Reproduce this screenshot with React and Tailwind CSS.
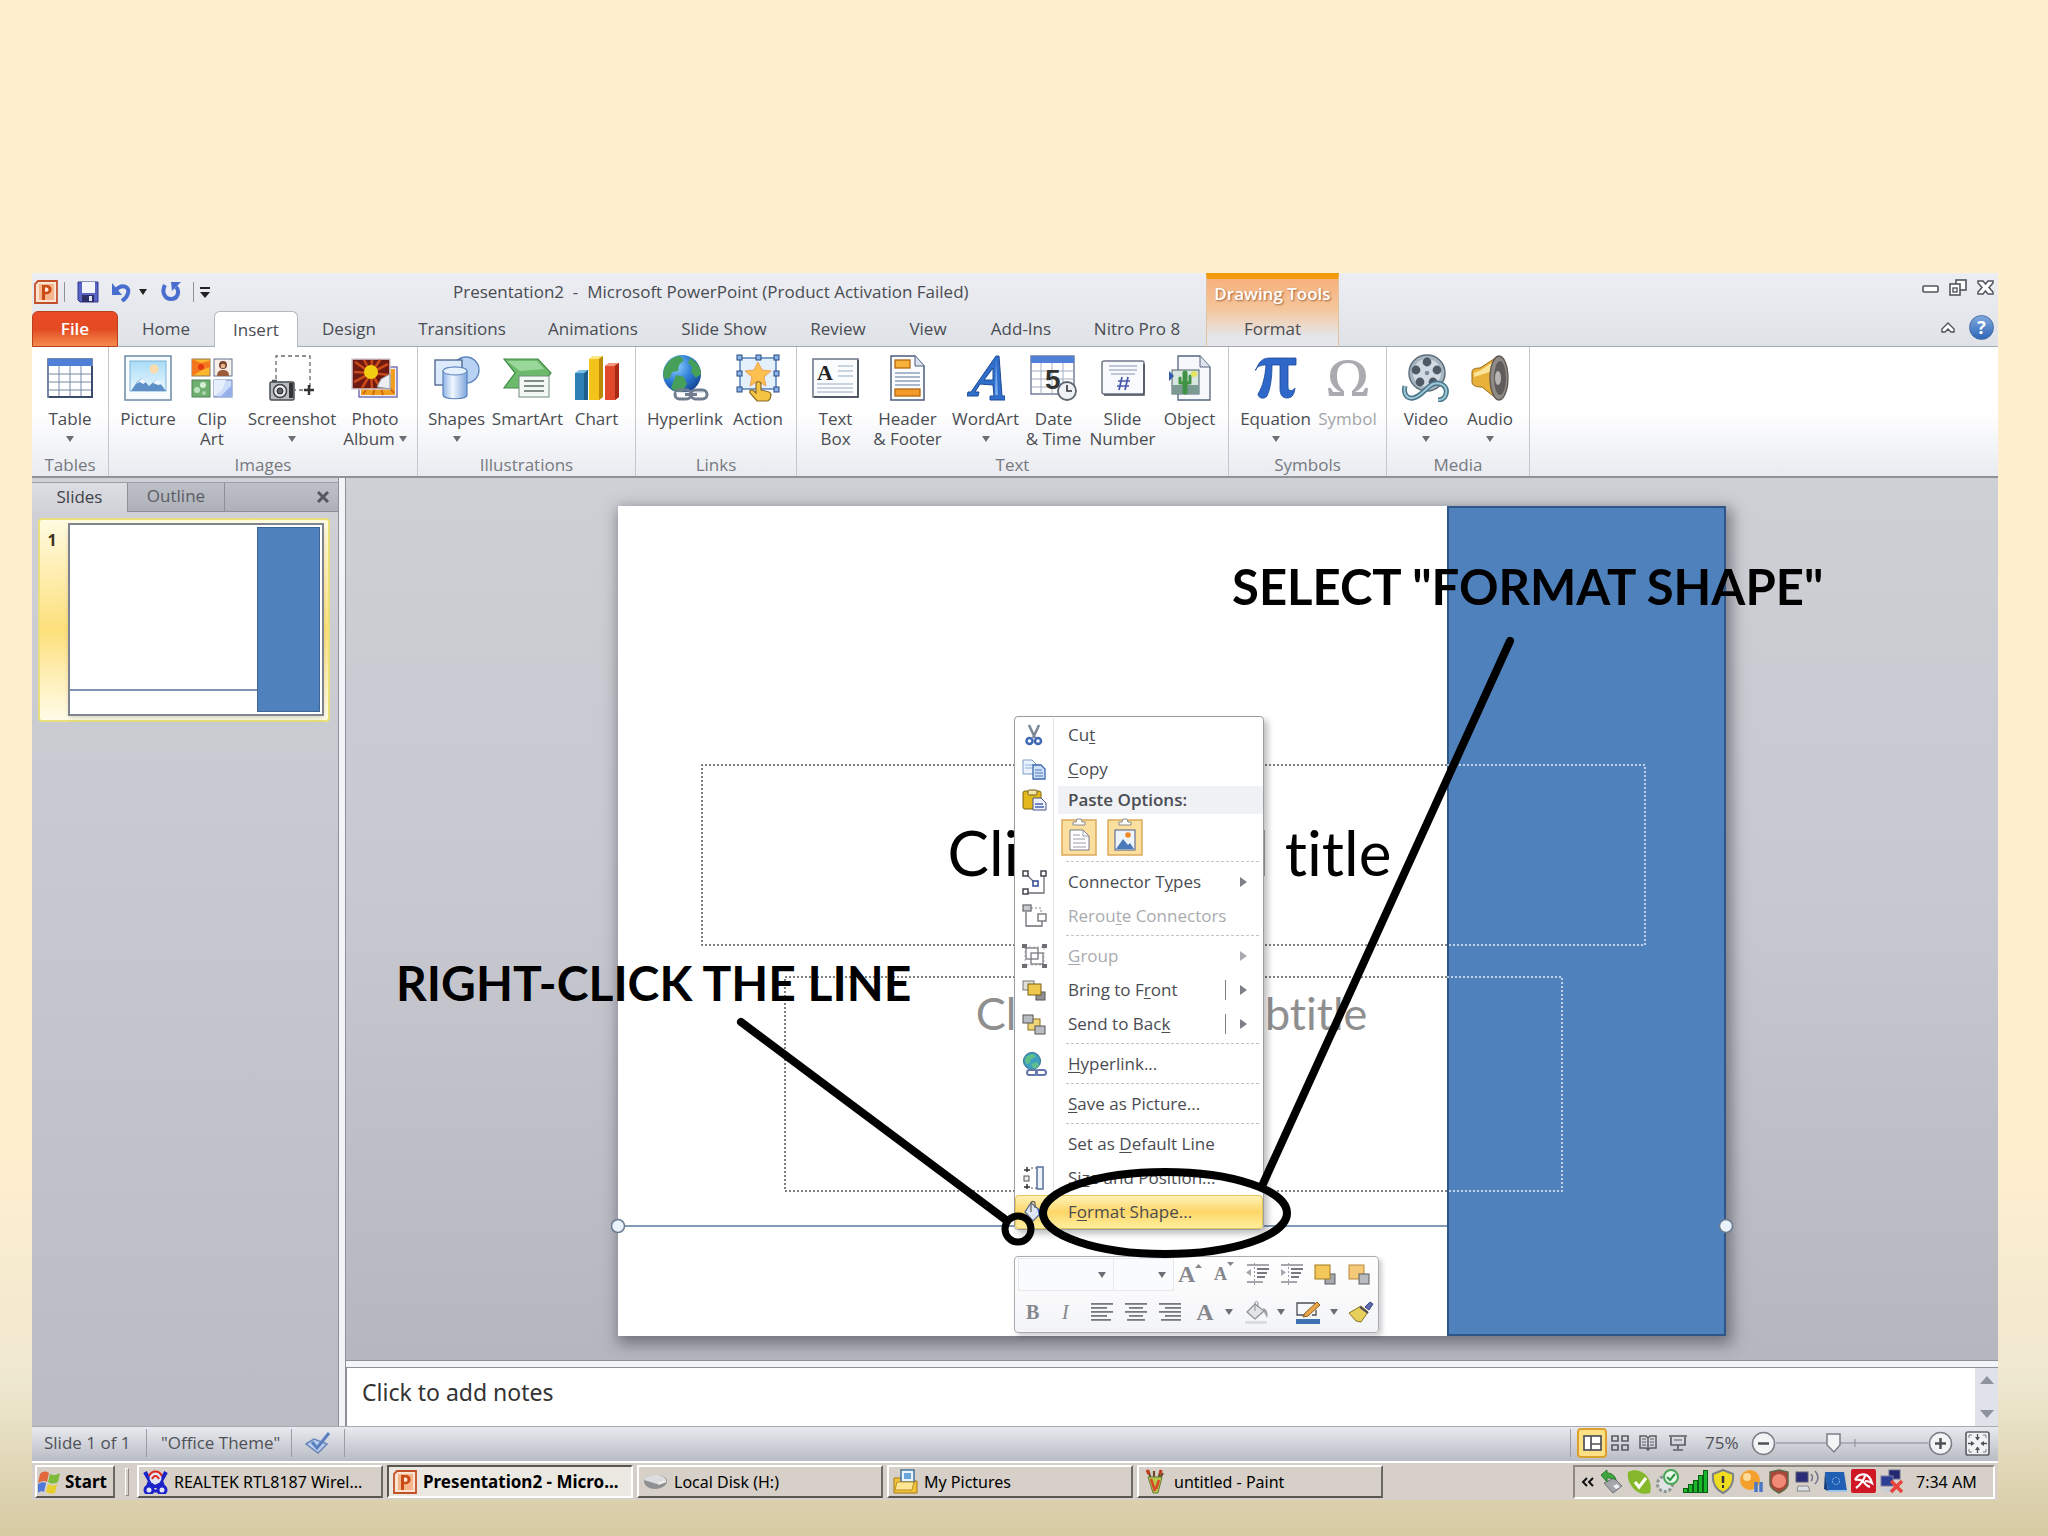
import React from "react";

/* ---------- small helpers ---------- */

function Svg({ w, h, children, ...rest }) {
  return (
    <svg width={w} height={h} viewBox={`0 0 ${w} ${h}`} fill="none" aria-hidden="true" className="shrink-0" {...rest}>
      {children}
    </svg>
  );
}

function Caret({ color = "#6b6e75" }) {
  return (
    <Svg w={8} h={6}>
      <path d="M0 0h8L4 6z" fill={color} />
    </Svg>
  );
}

function PptIcon({ w = 24, h = 24 }) {
  return (
    <svg width={w} height={h} viewBox="0 0 24 24" fill="none" aria-hidden="true" className="shrink-0">
      <path d="M4 1h19v22H1V4z" fill="#fbe3d2" stroke="#c2512a" strokeWidth="1.800" />
      <path d="M5 4h15v16H5z" fill="#f6b48c" />
      <path d="M8 20V5h5a4.600 4.600 0 0 1 0 9.200h-2V20z" fill="#c94a14" />
      <path d="M11 7.500h1.800a2.200 2.200 0 0 1 0 4.300H11z" fill="#fde9da" />
    </svg>
  );
}

/* ---------- ribbon icons ---------- */

const TableIcon = () => (
  <Svg w={46} h={40}>
    <rect x="1" y="1" width="44" height="38" fill="#fff" stroke="#4a5f8a" strokeWidth="1.500" />
    <rect x="1" y="1" width="44" height="7" fill="#4f7fd6" />
    <path d="M12 8v31M23 8v31M34 8v31M1 16h44M1 24h44M1 32h44" stroke="#7b89a8" />
    <path d="M2 39h43V8" stroke="#3c4a6b" strokeWidth="2" />
  </Svg>
);

const PictureIcon = () => (
  <Svg w={48} h={46}>
    <defs>
      <linearGradient id="sky" x1="0" y1="0" x2="0" y2="1">
        <stop offset="0" stopColor="#a9dcf7" />
        <stop offset="1" stopColor="#e9f7fd" />
      </linearGradient>
    </defs>
    <rect x="1" y="1" width="46" height="44" fill="#f8fcff" stroke="#6c8ba6" strokeWidth="1.500" />
    <rect x="6" y="6" width="36" height="30" fill="url(#sky)" stroke="#7fb2d6" />
    <circle cx="30" cy="14" r="4.500" fill="#fbdcae" />
    <path d="M7 36l6-9 5-4 7 8 8-7 9 12z" fill="#5f8fc7" />
    <path d="M12 29l6-6 4 4-3 2-3-2zM29 28l4-4 5 5-4 1z" fill="#eef7ff" />
  </Svg>
);

const ClipArtIcon = () => (
  <Svg w={42} h={40}>
    <rect x="1" y="1" width="18" height="17" fill="#fbb62c" stroke="#8e7a55" />
    <path d="M1 1l9 4 9-2v6l-8 3-10 6z" fill="#f4761d" />
    <circle cx="10" cy="9" r="3" fill="#e23a12" />
    <rect x="23" y="1" width="18" height="17" fill="#f6efe8" stroke="#65738f" />
    <circle cx="32" cy="7" r="4" fill="#7a4630" />
    <circle cx="32" cy="8" r="2.300" fill="#e7b48d" />
    <path d="M26 18c0-4 2-6 6-6s6 2 6 6z" fill="#9b5a3a" />
    <rect x="1" y="22" width="18" height="17" fill="#6fb071" stroke="#4f8059" />
    <circle cx="6" cy="32" r="3" fill="#bfe3c0" />
    <circle cx="12" cy="27" r="3" fill="#d5efd5" />
    <circle cx="13" cy="35" r="2" fill="#a8d6aa" />
    <rect x="23" y="22" width="18" height="17" fill="#cddcf8" stroke="#6b83b5" />
    <path d="M23 22h12l-4 10-8 6z" fill="#e8effc" />
    <path d="M41 27v12H29z" fill="#97b0ec" />
  </Svg>
);

const ScreenshotIcon = () => (
  <Svg w={46} h={46}>
    <path d="M7 24V1h34v34H26" stroke="#6b6b6b" strokeWidth="1.300" strokeDasharray="4 3" />
    <path d="M35 35h10M40 30v10" stroke="#333" strokeWidth="2.500" />
    <rect x="1" y="27" width="24" height="18" rx="1.500" fill="#b9bcc0" stroke="#4a4d52" strokeWidth="1.500" />
    <path d="M3 26h5" stroke="#4a4d52" strokeWidth="2.500" />
    <circle cx="11" cy="36" r="6.500" fill="#ecedef" stroke="#3d4045" strokeWidth="1.500" />
    <circle cx="11" cy="36" r="3" fill="#5d6270" stroke="#222" />
    <rect x="20" y="28" width="4" height="15" fill="#333" />
  </Svg>
);

const PhotoAlbumIcon = () => (
  <Svg w={48} h={40}>
    <rect x="8" y="9" width="38" height="30" fill="#eef" stroke="#7a74b0" strokeWidth="1.500" />
    <rect x="10" y="11" width="34" height="26" fill="#f0a01e" />
    <path d="M12 36l12-16M22 37l4-16M32 37l-4-14M43 35L30 20" stroke="#d06a10" strokeWidth="2" />
    <rect x="1" y="1" width="38" height="30" fill="#6e1a10" stroke="#d9cfd6" strokeWidth="1.500" />
    <path d="M20 15L4 4M20 15L13 2M20 15l1-13M20 15l9-13M20 15l17-9M20 15l18 2M20 15L3 14M20 15L3 24M20 15l-9 15M20 15l1 15M20 15l9 14" stroke="#c8481a" strokeWidth="2.600" />
    <circle cx="20" cy="14" r="7" fill="#f3cf12" />
    <path d="M39 16l-9 5-4 8 13 2z" fill="#eceef2" stroke="#8d929c" />
  </Svg>
);

const ShapesIcon = () => (
  <Svg w={48} h={44}>
    <defs>
      <linearGradient id="cyl" x1="0" y1="0" x2="1" y2="0">
        <stop offset="0" stopColor="#8fb4e6" />
        <stop offset="0.400" stopColor="#f1f7ff" />
        <stop offset="1" stopColor="#7ea6dc" />
      </linearGradient>
    </defs>
    <circle cx="33" cy="14" r="13" fill="#b8d2f3" stroke="#5a82bd" strokeWidth="1.300" />
    <rect x="2" y="4" width="27" height="25" fill="#dceafb" stroke="#47608c" strokeWidth="1.300" />
    <path d="M10 15c0-5 24-5 24 0v24c0 5-24 5-24 0z" fill="url(#cyl)" stroke="#5a82bd" strokeWidth="1.200" />
    <ellipse cx="22" cy="15" rx="12" ry="4" fill="#e7f1fd" stroke="#5a82bd" />
  </Svg>
);

const SmartArtIcon = () => (
  <Svg w={50} h={40}>
    <path d="M1 1h34l13 14-13 15H1l11-15z" fill="#6dba6c" stroke="#3f8a45" strokeWidth="1.200" />
    <path d="M4 3h30l7 8-24 2z" fill="#9ad79a" />
    <rect x="16" y="18" width="30" height="21" fill="#f3f8f4" stroke="#6f8d78" />
    <path d="M21 23h20M21 28h20M21 33h20" stroke="#5c6b64" strokeWidth="1.600" />
  </Svg>
);

const ChartIcon = () => (
  <Svg w={46} h={46}>
    <path d="M1 18l4-3h10l-2 3z" fill="#7ac0e8" />
    <rect x="1" y="18" width="13" height="27" fill="#2e7fb4" />
    <path d="M10 18l4-3v30h-4z" fill="#1c5f8c" />
    <path d="M31 11l4-3h10v34l-4 3H31z" fill="#e0492b" />
    <path d="M31 11h9l5-3H35z" fill="#f6987f" />
    <path d="M41 11l4-3v34l-4 3z" fill="#a82a12" />
    <path d="M15 4l4-3h10v41l-4 3H15z" fill="#f2c318" />
    <path d="M15 4h9l5-3H19z" fill="#fbe784" />
    <path d="M25 4l4-3v41l-4 3z" fill="#bd8a06" />
  </Svg>
);

const HyperlinkIcon = () => (
  <Svg w={48} h={48}>
    <defs>
      <radialGradient id="globe" cx="0.350" cy="0.300" r="0.800">
        <stop offset="0" stopColor="#8fd0ff" />
        <stop offset="0.500" stopColor="#2f7fd8" />
        <stop offset="1" stopColor="#123d8c" />
      </radialGradient>
    </defs>
    <circle cx="21" cy="20" r="19" fill="url(#globe)" />
    <path d="M5 11c4-6 9-9 14-9l4 4-5 5-1 6-6 1-2 6-6 1c-1-5-1-9 2-14zM15 21l8 2 3 7-5 8c-4 1-8-1-11-4zM29 4c7 4 11 9 11 16l-5 4-5-6 1-5-4-4z" fill="#47a05a" />
    <g stroke="#707c8f" strokeWidth="3">
      <rect x="14" y="36" width="16" height="9" rx="4.500" fill="none" />
      <rect x="30" y="36" width="16" height="9" rx="4.500" fill="none" />
      <path d="M24 40.500h12" />
    </g>
    <path d="M15 38.500h12M32 38.500h12" stroke="#dfe6f0" strokeWidth="1.200" />
  </Svg>
);

const ActionIcon = () => (
  <Svg w={44} h={48}>
    <rect x="4" y="4" width="36" height="31" fill="#e4f0fc" stroke="#3c6eb0" strokeWidth="1.300" />
    <path d="M22 8l4 8 9 1-7 6 2 9-8-5-8 5 2-9-7-6 9-1z" fill="#fcc050" stroke="#eda05a" />
    {[
      [1, 1], [20, 1], [38, 1], [1, 17], [38, 17], [1, 33], [38, 33],
    ].map(([x, y]) => (
      <rect key={`${x}-${y}`} x={x} y={y} width="5" height="5" fill="#8cb4e8" stroke="#24497f" />
    ))}
    <path d="M20 30c0-3 5-3 5 0v6l8 2c3 1 2 4 1 7l-2 2H21l-7-8c-1-3 2-4 4-2l2 2z" fill="#f5c445" stroke="#8a6a2a" strokeWidth="1.200" />
  </Svg>
);

const TextBoxIcon = () => (
  <Svg w={47} h={40}>
    <rect x="1" y="1" width="45" height="38" fill="#fbfcfe" stroke="#6a7486" strokeWidth="1.500" />
    <path d="M46 2v37H2" stroke="#3f4754" strokeWidth="1.500" />
    <path d="M26 8h15M26 13h15M26 18h15M5 26h36M5 30h36M5 34h36" stroke="#9aa9c2" strokeWidth="1.200" />
    <text x="5" y="22" fontFamily="Liberation Serif, serif" fontWeight="700" fontSize="22" fill="#222">A</text>
  </Svg>
);

const HeaderFooterIcon = () => (
  <Svg w={35} h={46}>
    <path d="M1 1h24l9 10v34H1z" fill="#fbfcff" stroke="#4d5b7c" strokeWidth="1.500" />
    <path d="M25 1v10h9" fill="#dce4f2" stroke="#4d5b7c" />
    <rect x="5" y="5" width="15" height="8" fill="#f7b23b" stroke="#b5690f" strokeWidth="1.300" />
    <path d="M5 18h25M5 22h25M5 26h25M5 30h25" stroke="#8ea0bd" strokeWidth="1.400" />
    <rect x="5" y="34" width="25" height="7" fill="#f39a2b" stroke="#b5690f" strokeWidth="1.300" />
  </Svg>
);

const WordArtIcon = () => (
  <Svg w={38} h={46}>
    <path d="M29 1h3l3 40h3v4H23v-4h4l-1-11-13-1-5 8h4l-1 4H0l1-4h3zM26 13l-9 12h9z" fill="#2f6fcb" stroke="#1d4a94" />
    <path d="M29 4l2 36h-3z" fill="#79aaf0" />
  </Svg>
);

const DateTimeIcon = () => (
  <Svg w={47} h={46}>
    <rect x="1" y="1" width="43" height="38" fill="#fff" stroke="#5d6b88" strokeWidth="1.300" />
    <rect x="1" y="1" width="43" height="7" fill="#4f7fd6" />
    <path d="M11 8v31M22 8v31M33 8v31M1 16h43M1 24h43M1 32h43" stroke="#a5aec2" />
    <text x="15" y="34" fontFamily="Liberation Sans, sans-serif" fontWeight="700" fontSize="28" fill="#333">5</text>
    <circle cx="37" cy="36" r="9" fill="#eef2f7" stroke="#5f6670" strokeWidth="1.800" />
    <path d="M37 30v6h5" stroke="#333" strokeWidth="1.600" />
  </Svg>
);

const SlideNumberIcon = () => (
  <Svg w={44} h={36}>
    <rect x="1" y="1" width="42" height="33" rx="2" fill="#f8fafd" stroke="#6f7887" strokeWidth="1.500" />
    <path d="M3 35h40V4" stroke="#454d5a" strokeWidth="1.500" />
    <path d="M8 6h28M8 10h28M10 14h24" stroke="#a9b6cb" strokeWidth="1.300" />
    <path d="M21 17l-3 13M27 17l-3 13M17 21h12M16 26h12" stroke="#4a58a8" strokeWidth="1.700" />
  </Svg>
);

const ObjectIcon = () => (
  <Svg w={42} h={46}>
    <path d="M9 1h22l10 11v33H9z" fill="#f6f8fc" stroke="#56647f" strokeWidth="1.300" />
    <path d="M31 1v11h10" fill="#dde5f1" stroke="#56647f" />
    <rect x="3" y="15" width="27" height="24" fill="#d8e6e0" stroke="#4a5f6b" />
    <path d="M3 30h27v9H3z" fill="#7b9a92" />
    <path d="M16 37V18" stroke="#3f9143" strokeWidth="5" strokeLinecap="round" />
    <path d="M11 23v5h10v-7" stroke="#3f9143" strokeWidth="3" strokeLinecap="round" strokeLinejoin="round" />
    <circle cx="25" cy="19" r="3" fill="#e4e35a" />
    <path d="M0 16l5 5-5 5z" fill="#2f5ca8" />
  </Svg>
);

const PiIcon = () => (
  <Svg w={42} h={42}>
    <path d="M1 13C4 4 8 1 15 1h26v7h-8v22c0 4 4 5 7 1-1 8-4 10-8 10-5 0-7-4-7-9V8h-8c0 14-2 25-5 31-3 4-9 2-9-2 5-8 7-17 8-29-5 0-8 1-11 5z" fill="#2f68c8" stroke="#1b469a" strokeWidth="0.800" />
  </Svg>
);

const OmegaIcon = () => (
  <Svg w={42} h={38}>
    <path d="M1 29h3l2 4h8C6 29 3 23 3 17 3 7 10 1 21 1s18 6 18 16c0 6-3 12-11 16h8l2-4h3l-1 8H25v-5c5-4 7-9 7-15 0-9-4-13-11-13S10 8 10 17c0 6 2 11 7 15v5H2z" fill="#a9abae" />
  </Svg>
);

const VideoIcon = () => (
  <Svg w={48} h={48}>
    <circle cx="25" cy="19" r="18" fill="#a7b5c1" stroke="#5e6d7b" strokeWidth="1.500" />
    <circle cx="25" cy="19" r="14" fill="#d1dae2" />
    {[
      [25, 8], [35, 16], [31, 28], [18, 28], [14, 16],
    ].map(([x, y]) => (
      <circle key={`${x}-${y}`} cx={x} cy={y} r="4.400" fill="#4d5a66" />
    ))}
    <circle cx="25" cy="19" r="2.200" fill="#7d8c99" />
    <path d="M3 32c-2 8 2 13 8 12 8-1 12-10 20-14 8-3 15 3 13 10-1 4-4 6-8 6" stroke="#4a7487" strokeWidth="5" />
    <path d="M3 32c-2 8 2 13 8 12 8-1 12-10 20-14 8-3 15 3 13 10-1 4-4 6-8 6" stroke="#9cc7d6" strokeWidth="2" />
  </Svg>
);

const AudioIcon = () => (
  <Svg w={38} h={46}>
    <path d="M1 17c0-3 3-4 8-4L26 2v42L11 32c-7 0-10-2-10-5z" fill="#e8b23a" stroke="#97691a" />
    <path d="M3 18l7-3 12-8v9L3 22z" fill="#fbe39a" />
    <ellipse cx="28" cy="23" rx="9" ry="22" fill="#8e8a86" stroke="#5d5750" strokeWidth="1.300" />
    <ellipse cx="29" cy="23" rx="6" ry="17" fill="#605c5c" />
    <ellipse cx="27" cy="23" rx="3" ry="7" fill="#b9b5b2" />
  </Svg>
);

/* ---------- ribbon data ---------- */

const groups = [
  { name: "Tables", box: "w-[77px]", items: [{ lines: ["Table"], drop: true, box: "w-[74px]", Icon: TableIcon }] },
  {
    name: "Images", box: "w-[309px]", shift: "pr-1.5", items: [
      { lines: ["Picture"], box: "w-[70px]", Icon: PictureIcon },
      { lines: ["Clip", "Art"], box: "w-[58px]", Icon: ClipArtIcon },
      { lines: ["Screenshot"], drop: true, box: "w-[102px]", Icon: ScreenshotIcon },
      { lines: ["Photo", "Album"], drop: true, box: "w-[64px]", Icon: PhotoAlbumIcon },
    ],
  },
  {
    name: "Illustrations", box: "w-[218px]", shift: "pr-0.5", items: [
      { lines: ["Shapes"], drop: true, box: "w-[68px]", Icon: ShapesIcon },
      { lines: ["SmartArt"], box: "w-[74px]", Icon: SmartArtIcon },
      { lines: ["Chart"], box: "w-[64px]", Icon: ChartIcon },
    ],
  },
  {
    name: "Links", box: "w-[161px]", shift: "pr-0.5", items: [
      { lines: ["Hyperlink"], box: "w-[86px]", Icon: HyperlinkIcon },
      { lines: ["Action"], box: "w-[60px]", Icon: ActionIcon },
    ],
  },
  {
    name: "Text", box: "w-[432px]", shift: "pr-1", items: [
      { lines: ["Text", "Box"], box: "w-[64px]", Icon: TextBoxIcon },
      { lines: ["Header", "& Footer"], box: "w-[80px]", Icon: HeaderFooterIcon },
      { lines: ["WordArt"], drop: true, box: "w-[76px]", Icon: WordArtIcon },
      { lines: ["Date", "& Time"], box: "w-[60px]", Icon: DateTimeIcon },
      { lines: ["Slide", "Number"], box: "w-[78px]", Icon: SlideNumberIcon },
      { lines: ["Object"], box: "w-[56px]", Icon: ObjectIcon },
    ],
  },
  {
    name: "Symbols", box: "w-[158px]", shift: "pl-1", items: [
      { lines: ["Equation"], drop: true, box: "w-[76px]", Icon: PiIcon },
      { lines: ["Symbol"], disabled: true, box: "w-[68px]", Icon: OmegaIcon },
    ],
  },
  {
    name: "Media", box: "w-[143px]", items: [
      { lines: ["Video"], drop: true, box: "w-[64px]", Icon: VideoIcon },
      { lines: ["Audio"], drop: true, box: "w-[64px]", Icon: AudioIcon },
    ],
  },
];

function RibbonItem({ lines, drop, disabled, box, Icon }) {
  return (
    <button
      type="button"
      disabled={disabled}
      className={`flex flex-col items-center pt-2 ${box} ${disabled ? "text-[#a3a5a9]" : "text-[#4a4c52]"}`}
    >
      <span className="flex h-[46px] items-center justify-center"><Icon /></span>
      <span className="mt-2 whitespace-nowrap leading-5">{lines[0]}</span>
      <span className="flex h-5 items-center gap-1 whitespace-nowrap leading-5">
        {lines[1]}
        {drop && <Caret />}
      </span>
    </button>
  );
}

function Ribbon() {
  return (
    <div className="flex h-[131px] border-b-2 border-[#8f9299] bg-gradient-to-b from-white via-white to-[#e9ebf0]">
      {groups.map((g) => (
        <section key={g.name} aria-label={g.name} className={`flex flex-col items-center justify-between border-r border-[#c4c7ce] ${g.box}`}>
          <div className={`flex ${g.shift || ""}`}>
            {g.items.map((it) => <RibbonItem key={it.lines.join(" ")} {...it} />)}
          </div>
          <span className="leading-[22px] text-[#76797f]">{g.name}</span>
        </section>
      ))}
    </div>
  );
}

/* ---------- title bar and tabs ---------- */

const tabs = [
  { name: "Home", box: "w-[96px]" },
  { name: "Insert", box: "w-[84px]", active: true },
  { name: "Design", box: "w-[102px]" },
  { name: "Transitions", box: "w-[124px]" },
  { name: "Animations", box: "w-[138px]" },
  { name: "Slide Show", box: "w-[124px]" },
  { name: "Review", box: "w-[104px]" },
  { name: "View", box: "w-[76px]" },
  { name: "Add-Ins", box: "w-[110px]" },
  { name: "Nitro Pro 8", box: "w-[122px]" },
];

function Header() {
  return (
    <header className="flex bg-gradient-to-b from-[#eceef3] to-[#dfe2e7] text-[#4a4c52]">
      <div className="flex w-[1174px] flex-col">
        <div className="flex h-[38px] items-center">
          <div className="flex w-[421px] items-center pl-0.5">
            <PptIcon />
            <span className="ml-1.5 h-5 w-px bg-[#8e9299]" />
            <button type="button" aria-label="Save" className="ml-3">
              <Svg w={22} h={22}>
                <path d="M1 1h20v20H3l-2-2z" fill="#5a64c4" stroke="#2f3690" />
                <rect x="5" y="1" width="13" height="11" fill="#f2f5fc" />
                <rect x="5" y="14" width="12" height="7" fill="#2b2f66" />
                <rect x="12" y="15" width="3" height="5" fill="#dfe3f2" />
              </Svg>
            </button>
            <button type="button" aria-label="Undo" className="ml-3">
              <Svg w={20} h={20}>
                <path d="M5 8c6-7 14-3 12 3-1 4-3 6-6 8" stroke="#4a6ed0" strokeWidth="4" />
                <path d="M1 1v12h10z" fill="#4a6ed0" />
              </Svg>
            </button>
            <button type="button" aria-label="Undo history" className="ml-2"><Caret color="#222" /></button>
            <button type="button" aria-label="Redo" className="ml-3.5">
              <Svg w={20} h={20}>
                <path d="M4 3c-4 7 0 14 6 14 7 0 9-8 5-12" stroke="#4a6ed0" strokeWidth="4" />
                <path d="M10 0h10l-9 9z" fill="#4a6ed0" />
              </Svg>
            </button>
            <span className="ml-3 h-5 w-px bg-[#8e9299]" />
            <button type="button" aria-label="Customize toolbar" className="ml-1.5">
              <Svg w={10} h={11}>
                <path d="M0 1h10" stroke="#222" strokeWidth="2" />
                <path d="M0 5h10l-5 6z" fill="#222" />
              </Svg>
            </button>
          </div>
          <h1 className="whitespace-nowrap">Presentation2 &nbsp;- &nbsp;Microsoft PowerPoint (Product Activation Failed)</h1>
        </div>
        <nav className="flex h-[36px]">
          <button type="button" className="w-[86px] rounded-t-md border border-[#b8401c] bg-gradient-to-b from-[#ea4b26] via-[#e34a22] to-[#f58a4c] font-semibold text-white">File</button>
          {tabs.map((t) => (
            <button
              key={t.name}
              type="button"
              className={`${t.box} whitespace-nowrap ${t.active ? "rounded-t-md border border-b-0 border-[#b4b8bf] bg-white" : "border-b border-[#a5a9b0]"}`}
            >
              {t.name}
            </button>
          ))}
          <span className="flex-1 border-b border-[#a5a9b0]" />
        </nav>
      </div>
      <div className="flex w-[133px] flex-col border-x border-t-[6px] border-x-[#e2c3a0] border-t-[#f09a0c] bg-gradient-to-b from-[#f6b07c] via-[#f4c79c] via-45% to-[#e4e6ea] to-85%">
        <span className="flex h-[32px] items-center justify-center whitespace-nowrap pb-0.5 font-semibold text-white [text-shadow:1px_1px_2px_#a0603a]">Drawing Tools</span>
        <button type="button" className="h-[36px] border-b border-[#a5a9b0]">Format</button>
      </div>
      <div className="flex flex-1 flex-col items-end border-b border-[#a5a9b0] pr-1">
        <div className="flex h-[28px] items-center gap-2.5">
          <button type="button" aria-label="Minimize" className="pt-1">
            <Svg w={17} h={10}><rect x="1" y="2" width="15" height="6" rx="1" fill="#fff" stroke="#50545c" strokeWidth="1.600" /></Svg>
          </button>
          <button type="button" aria-label="Restore">
            <Svg w={18} h={17}>
              <rect x="7" y="1" width="10" height="10" fill="#fff" stroke="#50545c" strokeWidth="1.600" />
              <rect x="1" y="5" width="10" height="11" fill="#fff" stroke="#50545c" strokeWidth="1.600" />
              <rect x="4" y="9" width="4" height="4" stroke="#50545c" strokeWidth="1.400" />
            </Svg>
          </button>
          <button type="button" aria-label="Close">
            <Svg w={17} h={15}>
              <path d="M1 1h5l2.500 3L11 1h5v2l-4 4.500 4 4.500v2h-5l-2.500-3L6 14H1v-2l4-4.500L1 3z" fill="#fff" stroke="#50545c" strokeWidth="1.500" />
            </Svg>
          </button>
        </div>
        <div className="flex h-[44px] items-center gap-3.5 pt-2">
          <button type="button" aria-label="Minimize ribbon">
            <Svg w={14} h={11}>
              <path d="M7 1l6 6v3h-3L7 7l-3 3H1V7z" fill="#fff" stroke="#50545c" strokeWidth="1.400" />
            </Svg>
          </button>
          <button type="button" aria-label="Help" className="flex size-[25px] items-center justify-center rounded-full border border-[#4a6fa5] bg-gradient-to-b from-[#7fa9df] to-[#2f66b6] text-lg font-bold leading-none text-white">?</button>
        </div>
      </div>
    </header>
  );
}

/* ---------- left slide panel ---------- */

function SlidePanel() {
  return (
    <aside className="w-[307px] shrink-0 border-r border-[#8d9098] bg-gradient-to-b from-[#cfd1d6] via-[#c4c7ce] to-[#b9bcc5] pt-1">
      <div className="flex h-[30px] border-t border-[#9a9da5]">
        <button type="button" className="w-[95px] bg-gradient-to-b from-[#dcdee3] to-[#d0d2d8] pb-0.5 leading-6 text-[#3f4147]">Slides</button>
        <button type="button" className="w-[98px] border border-t-0 border-[#8d9098] bg-gradient-to-b from-[#bfc1c8] to-[#adb0b8] pb-0.5 leading-6 text-[#5a5d64]">Outline</button>
        <div className="flex flex-1 items-center justify-end border-b border-[#8d9098] bg-gradient-to-b from-[#bfc1c8] to-[#adb0b8] pr-2">
          <button type="button" aria-label="Close pane">
            <Svg w={14} h={14}><path d="M2 2l10 10M12 2L2 12" stroke="#55585f" strokeWidth="3" /></Svg>
          </button>
        </div>
      </div>
      <div className="ml-1.5 mr-2 mt-1.5 flex h-[204px] rounded-sm border-2 border-[#ebe07c] bg-gradient-to-b from-[#fffbe0] via-[#fddf7a] via-55% to-[#fffce8]">
        <span className="w-[28px] pr-1 pt-2 text-center font-['Noto_Sans'] text-base font-bold text-[#3b3420]">1</span>
        <div className="mb-1 mt-[3px] flex flex-1 border-2 border-[#7e8590] bg-white shadow-md">
          <div className="flex flex-1 flex-col">
            <div className="flex-1 border-b-2 border-[#7d93b4]" />
            <div className="h-[23px]" />
          </div>
          <div className="my-0.5 mr-0.5 w-[63px] border border-[#3e6596] bg-[#4f81bd]" />
        </div>
        <span className="w-1" />
      </div>
    </aside>
  );
}

/* ---------- context menu ---------- */

const menuIcons = {
  cut: (
    <Svg w={18} h={22}>
      <path d="M4 1l6 13M14 1L8 14" stroke="#7b8798" strokeWidth="2.500" />
      <circle cx="4.500" cy="17" r="3" stroke="#3f68b5" strokeWidth="2.500" />
      <circle cx="13" cy="17" r="3" stroke="#3f68b5" strokeWidth="2.500" />
    </Svg>
  ),
  copy: (
    <Svg w={24} h={21}>
      <path d="M1 1h9l4 4v10H1z" fill="#eaf2fd" stroke="#7c9cc6" />
      <path d="M3 6h8M3 9h8" stroke="#8fb0da" />
      <path d="M11 6h8l4 4v10H11z" fill="#cfe0f8" stroke="#3d68ad" strokeWidth="1.300" />
      <path d="M13 11h7M13 14h8M13 17h8" stroke="#4d7bc2" />
    </Svg>
  ),
  paste: (
    <Svg w={25} h={22}>
      <rect x="1" y="2" width="18" height="18" rx="2" fill="#e2b81d" stroke="#7f6410" />
      <rect x="6" y="1" width="9" height="5" rx="1.500" fill="#f4e7a6" stroke="#6b5a1c" />
      <path d="M11 9h8l5 5v7H11z" fill="#eef1fa" stroke="#4a5487" />
      <path d="M13 15h8M13 18h9" stroke="#4a62b8" strokeWidth="1.300" />
    </Svg>
  ),
  connector: (
    <Svg w={25} h={25}>
      <path d="M4 4l10 10M22 6v17H5" stroke="#6d6f75" strokeWidth="1.300" />
      <g fill="#fff" stroke="#44464d" strokeWidth="1.500">
        <rect x="1" y="1" width="5" height="5" /><rect x="19" y="1" width="5" height="5" />
        <rect x="1" y="19" width="5" height="5" /><rect x="11" y="11" width="5" height="5" stroke="#2e4a94" />
      </g>
    </Svg>
  ),
  reroute: (
    <Svg w={25} h={24}>
      <path d="M9 4h10v6" stroke="#888" strokeDasharray="2 2" />
      <path d="M4 8v14h16v-5" stroke="#6d6f74" strokeWidth="1.300" />
      <rect x="1" y="1" width="8" height="6" fill="#c9cbd0" stroke="#6d6f74" strokeWidth="1.300" />
      <rect x="16" y="10" width="8" height="7" fill="#fff" stroke="#6d6f74" strokeWidth="1.300" />
    </Svg>
  ),
  group: (
    <Svg w={25} h={24}>
      <path d="M3 3h19v18H3z" stroke="#b4b6ba" strokeDasharray="2 2" />
      <rect x="4" y="4" width="12" height="11" stroke="#77797e" strokeWidth="1.300" />
      <rect x="9" y="9" width="12" height="11" stroke="#77797e" strokeWidth="1.300" />
      <g fill="#6d6f75"><rect width="5" height="4" /><rect x="20" width="5" height="4" /><rect y="20" width="5" height="4" /><rect x="20" y="20" width="5" height="4" /></g>
    </Svg>
  ),
  front: (
    <Svg w={24} h={21}>
      <rect x="1" y="1" width="11" height="9" fill="#e0e2da" stroke="#777" />
      <rect x="14" y="12" width="9" height="8" fill="#8f9196" stroke="#555" />
      <rect x="6" y="4" width="13" height="11" fill="#efc84e" stroke="#7a5f14" />
    </Svg>
  ),
  back: (
    <Svg w={24} h={21}>
      <rect x="6" y="5" width="12" height="11" fill="#f2d77a" stroke="#8a6d1c" />
      <rect x="1" y="1" width="10" height="8" fill="#b9bcc2" stroke="#555" />
      <rect x="13" y="12" width="10" height="8" fill="#b9bcc2" stroke="#555" />
    </Svg>
  ),
  link: (
    <Svg w={25} h={25}>
      <circle cx="10" cy="9" r="8.500" fill="#3f9fc0" stroke="#2c6d86" />
      <path d="M3 7c2-4 6-5 9-5l2 3-5 2-1 4-4 1zM9 12l6-2 2 4-5 3z" fill="#5fbf8a" />
      <rect x="5" y="18" width="10" height="5" rx="2.500" stroke="#6676ad" strokeWidth="2" />
      <rect x="14" y="18" width="10" height="5" rx="2.500" stroke="#6676ad" strokeWidth="2" />
    </Svg>
  ),
  size: (
    <Svg w={22} h={24}>
      <path d="M1 4h6M4 1v5M1 21h6M4 18v5" stroke="#333" strokeWidth="1.500" />
      <path d="M8 2h6M8 22h6" stroke="#555" strokeDasharray="2 2" />
      <rect x="1" y="10" width="5" height="5" fill="#eee" stroke="#555" />
      <rect x="14" y="1" width="6" height="22" fill="#eef3fb" stroke="#5a6f9f" strokeWidth="1.500" />
    </Svg>
  ),
  fill: (
    <Svg w={24} h={24}>
      <path d="M8 3l11 9-9 9-8-9z" fill="#dfe6f3" stroke="#5a6b92" strokeWidth="1.300" />
      <path d="M8 12V3c0-2 4-2 4 0v5" stroke="#666" strokeWidth="1.300" />
      <path d="M14 8l8 6-2 9-4-7z" fill="#3567c4" />
    </Svg>
  ),
};

const menu = [
  { parts: ["Cu", "t", ""], icon: "cut" },
  { parts: ["", "C", "opy"], icon: "copy" },
  { heading: "Paste Options:", icon: "paste" },
  { paste: true },
  { sep: true },
  { parts: ["Connector T", "y", "pes"], icon: "connector", sub: true },
  { parts: ["Rerou", "t", "e Connectors"], icon: "reroute", disabled: true },
  { sep: true },
  { parts: ["", "G", "roup"], icon: "group", sub: true, disabled: true },
  { parts: ["Bring to F", "r", "ont"], icon: "front", sub: true, split: true },
  { parts: ["Send to Bac", "k", ""], icon: "back", sub: true, split: true },
  { sep: true },
  { parts: ["", "H", "yperlink..."], icon: "link" },
  { sep: true },
  { parts: ["", "S", "ave as Picture..."] },
  { sep: true },
  { parts: ["Set as ", "D", "efault Line"] },
  { parts: ["Si", "z", "e and Position..."], icon: "size" },
  { parts: ["F", "o", "rmat Shape..."], icon: "fill", active: true },
];

function IconCell({ children, plain }) {
  return (
    <span className={`flex w-[39px] shrink-0 items-center justify-center self-stretch ${plain ? "" : "border-r border-[#e2e4e7]"}`}>
      {children}
    </span>
  );
}

function MenuRow({ row }) {
  if (row.sep) {
    return (
      <div className="flex h-1.5">
        <IconCell />
        <span className="ml-3 mr-1 mt-0.5 flex-1 border-t border-dashed border-[#c3c5c9]" />
      </div>
    );
  }
  if (row.heading) {
    return (
      <div className="flex h-7 items-center">
        <IconCell>{menuIcons[row.icon]}</IconCell>
        <span className="ml-1 flex-1 bg-[#f0f1f4] pl-2.5 font-semibold leading-7">{row.heading}</span>
      </div>
    );
  }
  if (row.paste) {
    return (
      <div className="flex h-[45px]">
        <IconCell />
        <div className="flex gap-2.5 pl-[7px] pt-px">
          <button type="button" aria-label="Use destination theme">
            <Svg w={36} h={38}>
              <rect x="1" y="2" width="34" height="35" fill="#fbdf9f" stroke="#dba95c" strokeWidth="1.500" />
              <path d="M12 7V4h3l1-3h4l1 3h3v3z" fill="#fff" stroke="#8b8b8b" />
              <path d="M9 12h13l6 6v14H9z" fill="#fff" stroke="#77798a" />
              <path d="M22 12v6h6M12 17h7M12 21h12M12 25h13M12 29h13" stroke="#9a9ca6" />
            </Svg>
          </button>
          <button type="button" aria-label="Paste as picture">
            <Svg w={36} h={38}>
              <rect x="1" y="2" width="34" height="35" fill="#fbdf9f" stroke="#dba95c" strokeWidth="1.500" />
              <path d="M12 7V4h3l1-3h4l1 3h3v3z" fill="#fff" stroke="#8b8b8b" />
              <rect x="8" y="12" width="20" height="20" fill="#eef4fc" stroke="#4b5a86" />
              <circle cx="21" cy="17" r="2.800" fill="#f08a24" />
              <path d="M9 31l7-10 5 6 2-2 4 6z" fill="#4a78b8" />
            </Svg>
          </button>
        </div>
      </div>
    );
  }
  const [pre, key, post] = row.parts;
  return (
    <button
      type="button"
      disabled={row.disabled}
      className={`flex h-[34px] w-full items-center whitespace-nowrap text-left ${row.disabled ? "text-[#a9abaf]" : ""} ${row.active ? "rounded-sm bg-gradient-to-b from-[#fff3b8] via-[#fdd667] to-[#fff0a0] outline outline-1 -outline-offset-1 outline-[#e3c55c]" : ""}`}
    >
      <IconCell plain={row.active}>{row.icon && menuIcons[row.icon]}</IconCell>
      <span className="flex-1 pl-3.5">
        {pre}<u className="underline-offset-2">{key}</u>{post}
      </span>
      {row.split && <span className="mr-3.5 h-5 w-px bg-[#7c7f86]" />}
      {row.sub && (
        <span className="mr-4">
          <Svg w={7} h={10}><path d="M0 0l7 5-7 5z" fill={row.disabled ? "#a9abaf" : "#7c7f86"} /></Svg>
        </span>
      )}
    </button>
  );
}

function ContextMenu() {
  return (
    <div role="menu" className="absolute left-[396px] top-[210px] w-[250px] rounded-sm border border-[#9a9da3] bg-white pt-px text-[#4a4c52] shadow-[4px_4px_6px_rgba(0,0,0,0.25)]">
      {menu.map((row, i) => <MenuRow key={i} row={row} />)}
    </div>
  );
}

/* ---------- mini toolbar ---------- */

function Lines({ rows }) {
  return (
    <Svg w={22} h={18}>
      {rows.map(([x, w], i) => <rect key={i} x={x} y={i * 4} width={w} height="1.800" fill="#77797f" />)}
    </Svg>
  );
}

function IndentIcon({ flip }) {
  return (
    <Svg w={24} h={22}>
      <path d="M1 2h22M1 19h16" stroke="#888b91" strokeWidth="1.600" />
      <path d="M11 6h12M11 10h10M11 14h8" stroke="#77797f" strokeWidth="2.200" />
      <path d="M8.500 0v22" stroke="#9a9ca2" strokeDasharray="2 2" />
      <path d={flip ? "M1 6l5 3.500L1 13z" : "M5 6v7L0 9.500z"} fill="#a5a8ae" />
    </Svg>
  );
}

function MiniToolbar() {
  return (
    <div className="absolute left-[396px] top-[750px] flex h-[77px] w-[365px] flex-col rounded-sm border border-[#a9acb2] bg-gradient-to-b from-white to-[#f3f4f6] px-[3px] text-[#85878d] shadow-[3px_3px_5px_rgba(0,0,0,0.2)]">
      <div className="flex h-[34px] items-center">
        <div className="relative">
          <select aria-label="Font" className="h-[33px] w-[96px] appearance-none border border-[#e6e8eb] bg-[#fafbfc]" />
          <span className="pointer-events-none absolute right-2 top-3.5"><Caret /></span>
        </div>
        <div className="relative">
          <select aria-label="Font size" className="h-[33px] w-[60px] appearance-none border border-l-0 border-[#e6e8eb] bg-[#fafbfc]" />
          <span className="pointer-events-none absolute right-2 top-3.5"><Caret /></span>
        </div>
        <button type="button" aria-label="Grow font" className="ml-1 flex w-[28px] items-start font-['Liberation_Serif'] text-2xl font-bold leading-8">A<span className="mt-1.5"><Svg w={7} h={4}><path d="M0 4l3.500-4L7 4z" fill="#85878d" /></Svg></span></button>
        <button type="button" aria-label="Shrink font" className="ml-2 flex w-[24px] items-start font-['Liberation_Serif'] text-lg font-bold leading-9">A<span className="mt-1.5"><Svg w={7} h={4}><path d="M0 0h7L3.500 4z" fill="#85878d" /></Svg></span></button>
        <button type="button" aria-label="Decrease indent" className="ml-2"><IndentIcon /></button>
        <button type="button" aria-label="Increase indent" className="ml-2.5"><IndentIcon flip /></button>
        <button type="button" aria-label="Bring forward" className="ml-2.5">
          <Svg w={22} h={21}><rect x="11" y="10" width="10" height="10" fill="#a6a8ae" stroke="#5a5c62" /><rect x="1" y="1" width="15" height="14" fill="#f4c75a" stroke="#a07a1c" /></Svg>
        </button>
        <button type="button" aria-label="Send backward" className="ml-3">
          <Svg w={22} h={21}><rect x="1" y="1" width="15" height="14" fill="#f4c97a" stroke="#b8893a" /><rect x="11" y="10" width="10" height="10" fill="#b9bbc1" stroke="#5a5c62" /></Svg>
        </button>
      </div>
      <div className="flex h-[38px] items-center pl-2 pt-1">
        <button type="button" aria-label="Bold" className="w-[24px] text-left font-['Liberation_Serif'] text-xl font-bold leading-8">B</button>
        <button type="button" aria-label="Italic" className="w-[41px] pl-3 text-left font-['Liberation_Serif'] text-xl italic leading-8">I</button>
        <button type="button" aria-label="Align left"><Lines rows={[[0, 22], [0, 16], [0, 22], [0, 16], [0, 20]]} /></button>
        <button type="button" aria-label="Center" className="ml-3"><Lines rows={[[0, 22], [4, 14], [0, 22], [4, 14], [2, 18]]} /></button>
        <button type="button" aria-label="Align right" className="ml-3"><Lines rows={[[0, 22], [6, 16], [0, 22], [6, 16], [2, 20]]} /></button>
        <button type="button" aria-label="Font color" className="ml-3.5 w-[20px] font-['Liberation_Serif'] text-2xl font-bold leading-8">A</button>
        <span className="ml-2.5"><Caret /></span>
        <button type="button" aria-label="Shape fill" className="ml-3">
          <Svg w={24} h={23}>
            <path d="M10 3l9 7-9 8-8-7z" fill="#e3e4e6" stroke="#8f9196" strokeWidth="1.300" />
            <path d="M10 10V2c0-2 3-2 3 0v4" stroke="#8f9196" />
            <path d="M18 7c5 2 5 6 4 10l-3-6z" fill="#9b9da2" />
            <rect y="20" width="22" height="3" fill="#dcdde0" />
          </Svg>
        </button>
        <span className="ml-2"><Caret /></span>
        <button type="button" aria-label="Shape outline" className="ml-2.5">
          <Svg w={25} h={23}>
            <path d="M20 2H2v12h10M21 9v5h-4" stroke="#4b4d54" strokeWidth="1.300" />
            <path d="M22 1l3 3-12 11-5 1 2-4z" fill="#e9a54a" stroke="#8c5a1c" />
            <rect x="1" y="18" width="24" height="5" fill="#3f71b5" />
          </Svg>
        </button>
        <span className="ml-2.5"><Caret /></span>
        <button type="button" aria-label="Format painter" className="ml-2.5">
          <Svg w={26} h={22}>
            <path d="M17 6l5-5 3 2-4 6z" fill="#5b6bb2" stroke="#39427c" />
            <path d="M1 12l12-7 7 6-7 10-5-1z" fill="#e7cf5c" stroke="#8b7320" />
            <path d="M12 6l8 6" stroke="#4a4a5c" strokeWidth="2" />
          </Svg>
        </button>
      </div>
    </div>
  );
}

/* ---------- slide canvas ---------- */

function SlideStage() {
  return (
    <div className="relative mx-auto mb-6 mt-7 h-[830px] w-[1108px] shrink-0">
      <div className="absolute inset-0 bg-white shadow-[3px_5px_14px_3px_rgba(60,60,70,0.55)]" />
      <div className="absolute inset-y-0 right-0 w-[279px] border-2 border-[#2f5688] bg-[#4f81bd]" />
      <div className="absolute left-[84px] top-[259px] flex h-[181px] w-[943px] items-center justify-center pb-2 pr-2">
        <h2 className="whitespace-nowrap font-['Lato'] text-[62px] leading-none text-black [font-variant-ligatures:none]">Click to add title</h2>
      </div>
      <div className="absolute left-[167px] top-[471px] flex h-[214px] w-[777px] justify-center pr-1 pt-3">
        <p className="whitespace-nowrap font-['Lato'] text-[45px] leading-[48px] text-[#8f8f8f] [font-variant-ligatures:none]">Click to add subtitle</p>
      </div>
      <svg width="1108" height="830" viewBox="0 0 1108 830" fill="none" className="absolute inset-0 overflow-visible" aria-hidden="true">
        <g strokeWidth="1.500" strokeDasharray="2 2">
          <path d="M829 259H84v180h745M829 471H167v214h662" stroke="#555" />
          <path d="M829 259h198v180H829M829 471h115v214H829" stroke="#e6ecf5" />
        </g>
        <path d="M0 720h829" stroke="#56799f" strokeWidth="1.500" />
        <g fill="#eaf3fb" stroke="#6a7b90" strokeWidth="1.500">
          <circle cx="0" cy="720" r="6.500" />
          <circle cx="1108" cy="720" r="6.500" />
        </g>
      </svg>
      <ContextMenu />
      <MiniToolbar />
      <svg width="1108" height="830" viewBox="0 0 1108 830" fill="none" className="pointer-events-none absolute inset-0 overflow-visible" aria-hidden="true">
        <g stroke="#000" strokeWidth="8" strokeLinecap="round">
          <path d="M892 135L644 680" />
          <path d="M123 516l265 198" />
          <ellipse cx="547" cy="707" rx="122" ry="41" />
          <circle cx="400" cy="723" r="13" strokeWidth="7" />
        </g>
      </svg>
      <p className="absolute left-[614px] top-[50px] whitespace-nowrap font-['Lato'] text-[49px] font-bold leading-[60px] text-black">SELECT "FORMAT SHAPE"</p>
      <p className="absolute left-[-222px] top-[447px] whitespace-nowrap font-['Lato'] text-[48px] font-bold leading-[60px] text-black">RIGHT-CLICK THE LINE</p>
    </div>
  );
}

function Notes() {
  return (
    <div className="flex h-[66px] border-t border-[#8d9098] bg-[#f2f4f8] pt-1.5">
      <div className="flex flex-1 border-l border-t border-[#8d9098] bg-white">
        <textarea aria-label="Notes" rows={1} placeholder="Click to add notes" className="flex-1 resize-none overflow-hidden bg-transparent pl-[15px] pt-2 font-['Noto_Sans'] text-[23px] leading-8 placeholder:text-[#333] placeholder:opacity-100" />
        <div className="flex w-[23px] flex-col items-center justify-between bg-[#dfe2e8] py-2">
          <Svg w={14} h={8}><path d="M0 8l7-8 7 8z" fill="#8e929c" /></Svg>
          <Svg w={14} h={8}><path d="M0 0h14L7 8z" fill="#8e929c" /></Svg>
        </div>
      </div>
    </div>
  );
}

/* ---------- status bar ---------- */

const Rule = () => <span className="h-7 w-px bg-[#9a9ea8]" />;

function StatusBar() {
  return (
    <footer className="flex h-[35px] items-center border-t border-[#a7aab1] bg-gradient-to-b from-[#e8eaef] to-[#b9bcc4] pb-0.5 text-[#4f5157]">
      <span className="w-[114px] whitespace-nowrap pl-3">Slide 1 of 1</span>
      <Rule />
      <span className="w-[144px] whitespace-nowrap pl-3.5">"Office Theme"</span>
      <Rule />
      <span className="flex w-[52px] justify-center">
        <Svg w={26} h={24}>
          <path d="M1 13l8-5 13 5-9 9z" fill="#b9cdec" stroke="#6a86b8" strokeWidth="1.500" />
          <path d="M7 11l5 6L24 2" stroke="#5a7fc0" strokeWidth="3" />
        </Svg>
      </span>
      <Rule />
      <span className="flex-1" />
      <Rule />
      <button type="button" aria-label="Normal view" className="ml-1.5 flex h-[30px] w-[30px] items-center justify-center rounded-sm border-2 border-[#dca02c] bg-[#fbe184]">
        <Svg w={19} h={16}>
          <rect x="1" y="1" width="17" height="14" fill="#fff" stroke="#4f5157" strokeWidth="1.700" />
          <path d="M8 1v14M8 9h10" stroke="#4f5157" strokeWidth="1.700" />
        </Svg>
      </button>
      <button type="button" aria-label="Slide sorter" className="ml-1">
        <Svg w={18} h={16}><path d="M1 1h6v5H1zM11 1h6v5h-6zM1 10h6v5H1zM11 10h6v5h-6z" stroke="#5a5d64" strokeWidth="1.700" /></Svg>
      </button>
      <button type="button" aria-label="Reading view" className="ml-2.5">
        <Svg w={18} h={16}>
          <path d="M9 3L7 1H1v12h6l2 2 2-2h6V1h-6zM9 3v12" stroke="#5a5d64" strokeWidth="1.500" />
          <path d="M3 4h4M3 7h4M3 10h4M11 4h4M11 7h4M11 10h4" stroke="#5a5d64" />
        </Svg>
      </button>
      <button type="button" aria-label="Slide show" className="ml-3">
        <Svg w={18} h={16}>
          <path d="M0 1h18M2 2v8h14V2M9 10v4M4 15h10" stroke="#5a5d64" strokeWidth="1.700" />
          <path d="M5 5h8" stroke="#5a5d64" />
        </Svg>
      </button>
      <span className="w-[64px] whitespace-nowrap pl-[18px]">75%</span>
      <button type="button" aria-label="Zoom out">
        <Svg w={25} h={25}><circle cx="12.500" cy="12.500" r="11" fill="#f3f4f6" stroke="#7b7f87" strokeWidth="1.500" /><path d="M7 12.500h11" stroke="#4f5157" strokeWidth="2.500" /></Svg>
      </button>
      <span className="relative flex h-6 w-[152px] items-center">
        <Svg w={152} h={24}>
          <path d="M0 12h152M79 8v8" stroke="#85898f" />
          <path d="M51 3h13v11l-6 7-7-7z" fill="#f3f4f6" stroke="#7b7f87" strokeWidth="1.500" />
        </Svg>
        <input type="range" aria-label="Zoom" min="10" max="400" defaultValue="75" className="absolute inset-0 w-full opacity-0" />
      </span>
      <button type="button" aria-label="Zoom in">
        <Svg w={25} h={25}><circle cx="12.500" cy="12.500" r="11" fill="#f3f4f6" stroke="#7b7f87" strokeWidth="1.500" /><path d="M7 12.500h11M12.500 7v11" stroke="#4f5157" strokeWidth="2.500" /></Svg>
      </button>
      <button type="button" aria-label="Fit to window" className="ml-3 mr-2">
        <Svg w={25} h={25}>
          <rect x="1" y="1" width="23" height="23" rx="2" fill="#f1f2f4" stroke="#5f6269" strokeWidth="1.700" />
          <path d="M12.500 3v6M12.500 16v6M3 12.500h6M16 12.500h6" stroke="#4f5157" strokeWidth="1.300" />
          <path d="M10 6l2.500 3.500L15 6zM10 19l2.500-3.500L15 19zM6 10l3.500 2.500L6 15zM19 10l-3.500 2.500L19 15z" fill="#4f5157" />
          <path d="M4 4h3M4 4v3M21 4h-3M21 4v3M4 21h3M4 21v-3M21 21h-3M21 21v-3" stroke="#7c7f86" />
        </Svg>
      </button>
    </footer>
  );
}

/* ---------- taskbar ---------- */

const raised = "border-2 border-l-white border-t-white border-r-[#6d6a65] border-b-[#5a5752] bg-[#d6d0c8]";

const WinFlag = () => (
  <Svg w={24} h={24}>
    <path d="M3 4c3-3 6-3 9-1l-2 9c-3-2-6-1-9 1z" fill="#e2683c" />
    <path d="M13 4c3 2 6 1 10-1l-2 9c-4 2-7 2-10 0z" fill="#7dbb3b" />
    <path d="M1 14c3-2 6-2 8-1l-2 9c-2-1-4-1-6 1z" fill="#4f78d8" />
    <path d="M11 14c3 2 6 2 9 0l-2 9c-3 1-6 1-9-1z" fill="#e6cf2c" />
  </Svg>
);

const taskIcons = {
  realtek: (
    <Svg w={25} h={24}>
      <path d="M2 2l5 9-3 8M23 2l-5 9 3 8" stroke="#1c23c8" strokeWidth="4" />
      <path d="M6 10l6 5 7-5v8H6z" fill="#1c23c8" />
      <circle cx="12.500" cy="8" r="6" fill="#e3e4f4" />
      <path d="M6 6c3-6 10-6 13 0M9 9c2-4 5-4 7 0" stroke="#e0281c" strokeWidth="2" />
      <circle cx="6" cy="20" r="4" fill="#e3e4f4" stroke="#1c23c8" strokeWidth="3" />
      <circle cx="19" cy="20" r="4" fill="#e3e4f4" stroke="#1c23c8" strokeWidth="3" />
      <path d="M10 21h5" stroke="#1c23c8" strokeWidth="3" />
    </Svg>
  ),
  ppt: <PptIcon w={24} h={24} />,
  disk: (
    <Svg w={25} h={16}>
      <path d="M1 7c0-4 8-6 12-6s11 2 11 6-5 8-12 8S1 11 1 7z" fill="#8f9092" />
      <path d="M1 6c2-4 8-5 12-5s9 2 10 5l-9 4z" fill="#dcdddf" />
      <path d="M15 10l8-3" stroke="#f3f3f3" strokeWidth="2" />
    </Svg>
  ),
  folder: (
    <Svg w={25} h={25}>
      <path d="M1 9h7l2 3h14v12H1z" fill="#f1c23a" stroke="#a57c14" />
      <path d="M8 1h13v12H8z" fill="#eaf4fc" stroke="#46749c" strokeWidth="1.500" />
      <rect x="11" y="4" width="7" height="6" fill="#6aa7d8" />
      <path d="M4 13h17l-2 8H2z" fill="#fde694" stroke="#b98f20" />
    </Svg>
  ),
  paint: (
    <Svg w={25} h={25}>
      <path d="M8 10L5 1M11 10V2M15 10l3-9M16 11l4-7" stroke="#6b4a2a" strokeWidth="2.200" />
      <path d="M4 1l2 4M18 1l-1 4" stroke="#c43a1c" strokeWidth="3" />
      <path d="M5 8h14l-4 16h-5z" fill="#b7c94a" stroke="#6b7a3c" />
      <path d="M8 10l4 12M16 11l-3 9" stroke="#d8452a" strokeWidth="2.500" />
    </Svg>
  ),
};

const tasks = [
  { name: "REALTEK RTL8187 Wirel...", icon: "realtek" },
  { name: "Presentation2 - Micro...", icon: "ppt", active: true },
  { name: "Local Disk (H:)", icon: "disk" },
  { name: "My Pictures", icon: "folder" },
  { name: "untitled - Paint", icon: "paint" },
];

const trayIcons = [
  <g key="usb"><path d="M5 14l10-5 8 8-9 7z" fill="#a3a6ab" stroke="#6c6f74" /><path d="M14 17l4-2 3 3-4 2z" fill="#f0f1f3" /><path d="M2 6l6-5v3c4 0 8 2 9 7-3-2-5-2-9-2v4z" fill="#3fa63f" stroke="#2b7a30" /></g>,
  <g key="leaf"><path d="M1 3c6-3 12-2 17 2 5 5 7 12 5 19-7 2-13 0-17-5C2 14 0 9 1 3z" fill="#86b82c" /><path d="M8 13l4 5 7-9" stroke="#fff" strokeWidth="3" /></g>,
  <g key="gear"><circle cx="10" cy="15" r="7.500" fill="#dfe3e4" stroke="#8d9694" strokeWidth="3" strokeDasharray="3 2" /><circle cx="16" cy="8" r="7" fill="#e8f7ea" stroke="#49a557" strokeWidth="2" /><path d="M12 8l3 3 5-6" stroke="#2f9440" strokeWidth="2" /></g>,
  <g key="signal" fill="#18b82a" stroke="#0b5c14"><rect x="0.500" y="19.500" width="4" height="4" /><rect x="5.500" y="15.500" width="4" height="8" /><rect x="10.500" y="11.500" width="4" height="12" /><rect x="15.500" y="6.500" width="4" height="17" /><rect x="20.500" y="1.500" width="4" height="22" /></g>,
  <g key="shield"><path d="M12 1l10 4c1 9-2 15-10 19C4 20 1 14 2 5z" fill="#f0dc20" stroke="#7d8288" strokeWidth="2" /><path d="M12 7v7" stroke="#333" strokeWidth="2.500" /><rect x="11" y="16" width="2" height="3" fill="#333" /></g>,
  <g key="pause"><circle cx="11" cy="11" r="10" fill="#f4a02c" /><circle cx="8" cy="8" r="4" fill="#fddc9c" /><path d="M17 13v10M22 13v10" stroke="#4b78c4" strokeWidth="3.500" /></g>,
  <g key="redshield"><path d="M12 1l9 2v12c0 4-5 7-9 9-4-2-9-5-9-9V3z" fill="#a8483a" stroke="#5f6b4c" strokeWidth="1.500" /><circle cx="12" cy="12" r="7" fill="#f28a78" /></g>,
  <g key="net"><rect x="1" y="3" width="12" height="10" fill="#2a2c78" stroke="#5c6070" /><path d="M3 17h10l2 5H2z" fill="#dcdfe6" stroke="#888" /><path d="M16 5c2 2 2 5 0 7M20 2c4 4 4 9 0 13" stroke="#6f7490" strokeWidth="1.500" /></g>,
  <g key="blue"><path d="M2 3h19l3 19H5z" fill="#1f5fb4" /><path d="M2 3l3 19-4-2z" fill="#133f80" /><circle cx="13" cy="12" r="3.500" stroke="#8fc0f2" strokeDasharray="2 1" /><path d="M5 22h19" stroke="#9ec4ea" strokeWidth="2" /></g>,
  <g key="avira"><rect width="25" height="24" rx="2" fill="#cf1726" /><path d="M4 11C8 3 18 3 21 14c-3-2-5-2-7-2M4 11c3-1 5 0 8 1M14 7c-2 6-5 9-9 12M12 12c2 3 3 5 7 6" stroke="#fff" strokeWidth="2.200" /></g>,
  <g key="netx"><rect x="10" y="1" width="11" height="9" fill="#23276e" stroke="#6a6f94" /><rect x="2" y="7" width="12" height="10" fill="#2b3f94" stroke="#7b80a4" /><path d="M3 19h10v4H2z" fill="#c9cdd6" /><path d="M12 12l11 11M23 12L12 23" stroke="#e8423c" strokeWidth="3.500" /></g>,
];

function Taskbar() {
  return (
    <div className="flex h-[39px] items-center border-t-2 border-white bg-[#d6d0c8] px-[3px] font-['Noto_Sans'] text-base text-black">
      <button type="button" className={`flex h-[33px] w-[80px] items-center gap-1 text-[17px] font-bold ${raised}`}>
        <WinFlag />Start
      </button>
      <span className="ml-2.5 mr-2 h-[28px] w-[4px] border border-l-white border-t-white border-r-[#8f8b84] border-b-[#8f8b84]" />
      <div className="flex gap-1">
        {tasks.map((t) => (
          <button
            key={t.name}
            type="button"
            className={`flex h-[33px] w-[246px] items-center gap-1.5 whitespace-nowrap pl-1 ${t.active ? "border-2 border-l-[#5a5752] border-t-[#5a5752] border-r-white border-b-white bg-[#ebe8e2] text-[17px] font-bold" : raised}`}
          >
            {taskIcons[t.icon]}{t.name}
          </button>
        ))}
      </div>
      <span className="flex-1" />
      <div className="flex h-[34px] w-[422px] items-center border-2 border-l-[#8f8b84] border-t-[#8f8b84] border-r-white border-b-white pl-1.5">
        <button type="button" aria-label="Show hidden icons" className="w-[18px]">
          <Svg w={13} h={10}><path d="M6 1L2 5l4 4M12 1L8 5l4 4" stroke="#111" strokeWidth="2" /></Svg>
        </button>
        <div className="flex gap-[3px]">
          {trayIcons.map((g) => <Svg key={g.key} w={25} h={25}>{g}</Svg>)}
        </div>
        <time className="ml-3 whitespace-nowrap">7:34 AM</time>
      </div>
    </div>
  );
}

export default function App() {
  return (
    <main className="min-h-screen bg-gradient-to-b from-[#ffefcf] from-75% via-[#efe8d0] via-90% to-[#d6caa2] pb-9 pl-8 pr-[50px] pt-[273px] font-['Open_Sans','Noto_Sans',sans-serif] text-[17px] leading-6">
      <Header />
      <Ribbon />
      <div className="flex">
        <SlidePanel />
        <div className="w-[6px] shrink-0 bg-[#f2f4f8]" />
        <div className="flex min-w-0 flex-1 flex-col border-l border-[#8d9098]">
          <div className="flex overflow-hidden bg-gradient-to-b from-[#cdd0d5] via-[#c7c7d0] to-[#b5b6be]">
            <SlideStage />
          </div>
          <Notes />
        </div>
      </div>
      <StatusBar />
      <Taskbar />
    </main>
  );
}
